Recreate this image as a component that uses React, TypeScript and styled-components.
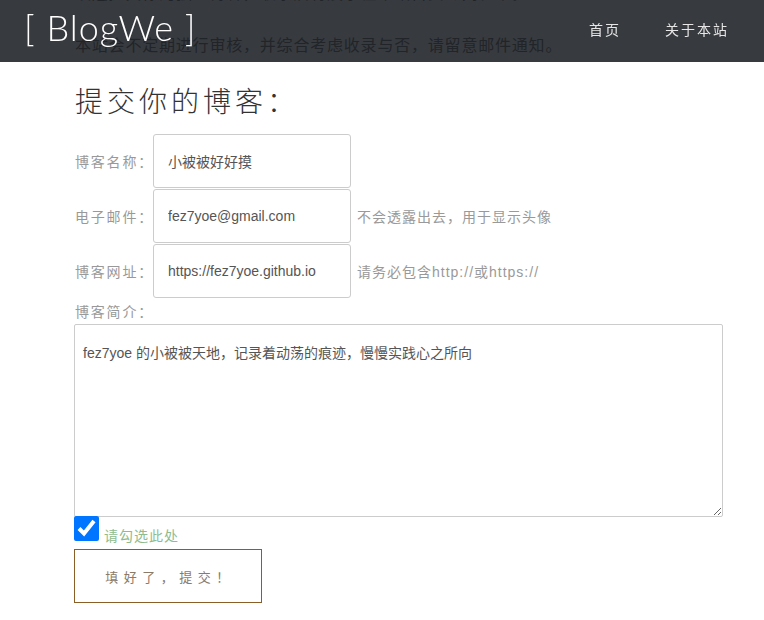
import React from "react";
import styled, { createGlobalStyle } from "styled-components";

const Global = createGlobalStyle`
  html, body { margin: 0; padding: 0; background: #fff; }
  body { font-family: "Liberation Sans", "Noto Sans CJK SC", sans-serif; color: #333; overflow: hidden; }
  * { box-sizing: border-box; }
`;

const Header = styled.header`
  position: fixed;
  top: 0;
  left: 0;
  right: 0;
  height: 62px;
  background: rgba(33, 37, 41, 0.9);
  display: flex;
  align-items: center;
  justify-content: space-between;
  padding: 0 35px 0 24px;
  z-index: 10;
`;

const Logo = styled.a`
  font-family: "Lato", "Open Sans", sans-serif;
  font-weight: 300;
  font-size: 36px;
  letter-spacing: 1px;
  color: #fff;
  text-decoration: none;
  margin-top: -8px;
  white-space: pre;
`;

const Nav = styled.nav`
  display: flex;
  gap: 44px;
  margin-top: -4px;
`;

const NavLink = styled.a`
  font-family: "Noto Sans CJK SC", sans-serif;
  font-size: 14px;
  letter-spacing: 2px;
  color: #e6e6e6;
  text-decoration: none;
`;

const Main = styled.main`
  padding: 0 41px 0 74px;
  margin-top: -21px;
`;

const Intro = styled.p`
  font-family: "Noto Sans CJK SC", sans-serif;
  font-size: 16px;
  line-height: 26px;
  letter-spacing: 0.8px;
  margin: 0 0 26px 1px;
  color: #222;
`;

const Title = styled.h2`
  font-family: "Noto Sans CJK SC", sans-serif;
  font-weight: 300;
  font-size: 28px;
  line-height: 34px;
  letter-spacing: 4px;
  margin: 0 0 17px 1px;
  color: #333;
`;

const Form = styled.form`
  display: flex;
  flex-direction: column;
`;

const Row = styled.div`
  display: flex;
  align-items: center;
  height: 54px;
  margin-bottom: 1px;
`;

const Label = styled.label`
  flex: 0 0 79px;
  min-width: 0;
  padding-left: 1px;
  white-space: nowrap;
  font-family: "Noto Sans CJK SC", sans-serif;
  font-size: 14px;
  letter-spacing: 1.8px;
  color: #999;
`;

const Input = styled.input`
  flex: 0 0 198px;
  width: 198px;
  height: 54px;
  border: 1px solid #ccc;
  border-radius: 3px;
  padding: 0 14px;
  font-family: "Liberation Sans", "Noto Sans CJK SC", sans-serif;
  font-size: 14px;
  color: #555;
  outline: none;
`;

const Hint = styled.span`
  margin-left: 6px;
  white-space: nowrap;
  font-family: "Liberation Sans", "Noto Sans CJK SC", sans-serif;
  font-size: 14px;
  letter-spacing: 1px;
  color: #999;
`;

const BlockLabel = styled(Label)`
  flex: none;
  margin: 2px 0 3px;
  line-height: 20px;
`;

const TextArea = styled.textarea`
  width: 649px;
  height: 193px;
  border: 1px solid #ccc;
  border-radius: 2px;
  padding: 18px 8px;
  font-family: "Liberation Sans", "Noto Sans CJK SC", sans-serif;
  font-size: 14px;
  line-height: 20px;
  color: #555;
  outline: none;
  display: block;
`;

const CheckRow = styled.div`
  display: flex;
  align-items: flex-end;
  gap: 5px;
  margin-top: -1px;
  height: 25px;
`;

const Check = styled.input`
  width: 25px;
  height: 25px;
  margin: 0;
`;

const CheckLabel = styled.label`
  font-family: "Noto Sans CJK SC", sans-serif;
  font-size: 14px;
  letter-spacing: 1px;
  color: #8fbc8f;
  line-height: 18px;
  margin-bottom: -3px;
`;

const Submit = styled.button`
  margin-top: 8px;
  width: 188px;
  height: 54px;
  background: #fff;
  border: 1px solid #8b5e28;
  font-family: "Noto Sans CJK SC", sans-serif;
  font-size: 13px;
  letter-spacing: 5.5px;
  color: #8a7a68;
  padding: 0 0 0 4px;
  cursor: pointer;
`;

export default function App() {
  return (
    <>
      <Global />
      <Header>
        <Logo href="#">[ BlogWe ]</Logo>
        <Nav>
          <NavLink href="#">首页</NavLink>
          <NavLink href="#">关于本站</NavLink>
        </Nav>
      </Header>
      <Main>
        <Intro>欢迎提交你的独立博客，收录后将展示在本站首页与列表中。</Intro>
        <Intro>本站会不定期进行审核，并综合考虑收录与否，请留意邮件通知。</Intro>
        <Title>提交你的博客：</Title>
        <Form onSubmit={(e) => e.preventDefault()}>
          <Row>
            <Label>博客名称：</Label>
            <Input defaultValue="小被被好好摸" />
          </Row>
          <Row>
            <Label>电子邮件：</Label>
            <Input defaultValue="fez7yoe@gmail.com" />
            <Hint>不会透露出去，用于显示头像</Hint>
          </Row>
          <Row>
            <Label>博客网址：</Label>
            <Input defaultValue="https://fez7yoe.github.io" />
            <Hint>请务必包含http://或https://</Hint>
          </Row>
          <BlockLabel>博客简介：</BlockLabel>
          <TextArea defaultValue="fez7yoe 的小被被天地，记录着动荡的痕迹，慢慢实践心之所向" />
          <CheckRow>
            <Check type="checkbox" defaultChecked />
            <CheckLabel>请勾选此处</CheckLabel>
          </CheckRow>
          <div>
            <Submit type="submit">填好了，提交！</Submit>
          </div>
        </Form>
      </Main>
    </>
  );
}
